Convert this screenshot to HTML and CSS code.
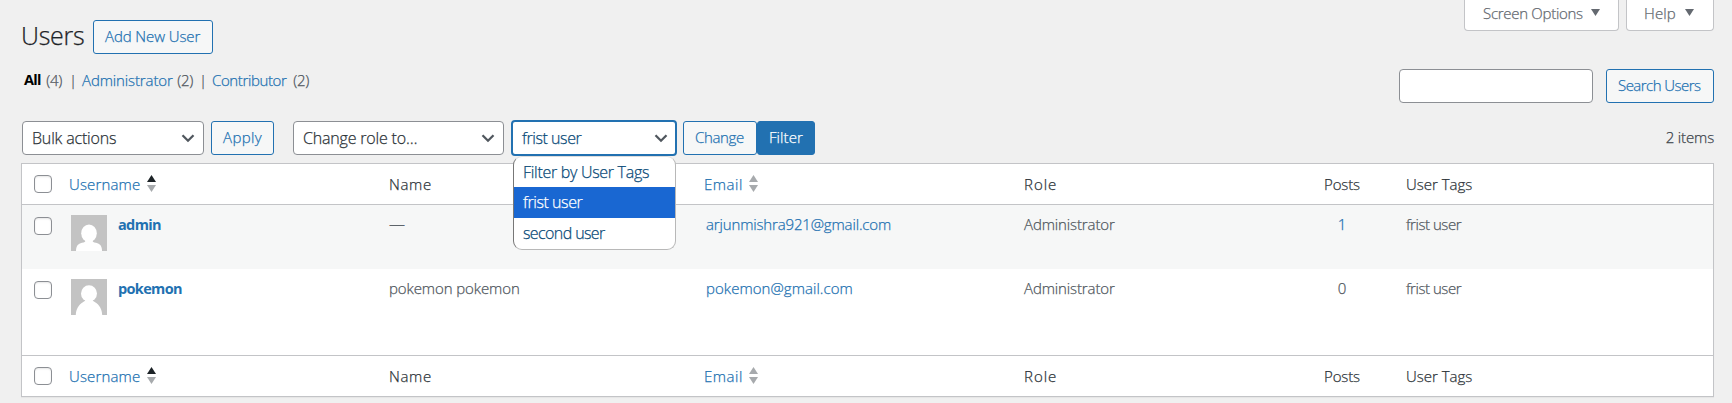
FILE: index.html
```html
<!DOCTYPE html>
<html lang="en">
<head>
<meta charset="utf-8">
<title>Users</title>
<link rel="stylesheet" href="styles.css">
</head>
<body>
<svg class="defs" width="0" height="0">
  <symbol id="chevron" viewBox="0 0 14 9"><path d="M1.500 1.300 7 6.700 12.500 1.300" fill="none" stroke="#50575e" stroke-width="2.300"/></symbol>
  <symbol id="up" viewBox="0 0 9 7"><path d="M4.500 0 9 7H0z"/></symbol>
  <symbol id="down" viewBox="0 0 9 7"><path d="M0 0H9L4.500 7z"/></symbol>
</svg>
<div class="page">
  <header class="top">
    <div class="heading">
      <h1 class="title">Users</h1>
      <a class="button add-new">Add New User</a>
    </div>
    <div class="screen-meta">
      <div class="tab options"><span>Screen Options</span><svg width="9" height="7"><use href="#down"/></svg></div>
      <div class="tab help"><span>Help</span><svg width="9" height="7"><use href="#down"/></svg></div>
    </div>
  </header>

  <div class="views">
    <ul class="subsub">
      <li class="v-all"><b>All</b><span class="count">(4)</span></li>
      <li class="bar wide">|</li>
      <li class="v-admin"><a class="t-admin">Administrator</a><span class="count">(2)</span></li>
      <li class="bar">|</li>
      <li class="v-contrib"><a class="t-contrib">Contributor</a><span class="count">(2)</span></li>
    </ul>
    <div class="search">
      <input class="search-box" type="text">
      <a class="button search-btn">Search Users</a>
    </div>
  </div>

  <div class="tablenav">
    <div class="select bulk"><span>Bulk actions</span><svg width="14" height="9"><use href="#chevron"/></svg></div>
    <a class="button apply">Apply</a>
    <div class="select role"><span>Change role to…</span><svg width="14" height="9"><use href="#chevron"/></svg></div>
    <div class="select tags"><span class="opt-frist">frist user</span><svg width="14" height="9"><use href="#chevron"/></svg>
      <div class="menu">
        <div class="option opt-filter">Filter by User Tags</div>
        <div class="option opt-frist selected">frist user</div>
        <div class="option opt-second">second user</div>
      </div>
    </div>
    <a class="button change">Change</a>
    <a class="button filter">Filter</a>
    <span class="items">2 items</span>
  </div>

  <div class="table">
    <div class="row head">
      <i class="check"></i>
      <a class="sort"><span class="h-username">Username</span><span class="arrows"><svg class="on" width="9" height="7"><use href="#up"/></svg><svg width="9" height="7"><use href="#down"/></svg></span></a>
      <span class="h-name">Name</span>
      <a class="sort"><span class="h-email">Email</span><span class="arrows"><svg width="9" height="7"><use href="#up"/></svg><svg width="9" height="7"><use href="#down"/></svg></span></a>
      <span class="h-role">Role</span>
      <span class="posts">Posts</span>
      <span class="h-tags">User Tags</span>
    </div>
    <div class="row user first">
      <i class="check"></i>
      <div class="who"><svg class="avatar" viewBox="0 0 36 36"><path fill="#c3c3c3" d="M0 0h36v36H0z"/><ellipse cx="18" cy="18.300" rx="7.800" ry="8.800" fill="#fff"/><path fill="#fff" d="M14.500 25h7c0 2 1 2.300 3.500 2.800 4 .9 6 3.200 6 8.200H5c0-5 2-7.300 6-8.200 2.500-.5 3.500-.8 3.500-2.800z"/></svg><a class="login">admin</a></div>
      <span class="dash">—</span>
      <a class="mail t-arjun">arjunmishra921@gmail.com</a>
      <span class="t-admin">Administrator</span>
      <a class="posts num">1</a>
      <span class="t-frist">frist user</span>
    </div>
    <div class="row user second">
      <i class="check"></i>
      <div class="who"><svg class="avatar" viewBox="0 0 36 36"><path fill="#c3c3c3" d="M0 0h36v36H0z"/><ellipse cx="18" cy="14.500" rx="8" ry="8.200" fill="#fff"/><path fill="#fff" d="M14.500 20h7c0 2 1 2.300 2.600 3.200 4.400 2.600 6.900 7 7.100 12.800H4.800c.2-5.800 2.700-10.200 7.100-12.800 1.600-.9 2.600-1.200 2.600-3.200z"/></svg><a class="login">pokemon</a></div>
      <span class="t-fullname">pokemon pokemon</span>
      <a class="mail t-pokemail">pokemon@gmail.com</a>
      <span class="t-admin">Administrator</span>
      <span class="posts num">0</span>
      <span class="t-frist">frist user</span>
    </div>
    <div class="row foot">
      <i class="check"></i>
      <a class="sort"><span class="h-username">Username</span><span class="arrows"><svg class="on" width="9" height="7"><use href="#up"/></svg><svg width="9" height="7"><use href="#down"/></svg></span></a>
      <span class="h-name">Name</span>
      <a class="sort"><span class="h-email">Email</span><span class="arrows"><svg width="9" height="7"><use href="#up"/></svg><svg width="9" height="7"><use href="#down"/></svg></span></a>
      <span class="h-role">Role</span>
      <span class="posts">Posts</span>
      <span class="h-tags">User Tags</span>
    </div>
  </div>
</div>
</body>
</html>
```
FILE: styles.css
```css
* { box-sizing: border-box; }
body {
  margin: 0;
  height: 403px;
  overflow: hidden;
  background: #f0f0f0;
  color: #50575e;
  font: 300 15px/20px "Open Sans", "Noto Sans", sans-serif;
  white-space: nowrap;
  -webkit-text-stroke: 0.25px currentColor;
}
a { color: #2271b1; }
svg { display: block; flex: none; }
.defs { position: absolute; }
.page { padding: 0 18px 0 21px; }

.button {
  display: block;
  height: 34px;
  padding-left: 11px;
  border: 1px solid #2271b1;
  border-radius: 3px;
  background: #f6f7f7;
  line-height: 31px;
}

.top { display: flex; justify-content: space-between; height: 69px; }
.heading { display: flex; padding-top: 20px; }
.title {
  width: 72px;
  margin: 0;
  font-size: 25px;
  font-weight: 300;
  line-height: 31px;
  letter-spacing: -0.3px;
  color: #1d2327;
}
.add-new { width: 120px; letter-spacing: -0.1px; }
.screen-meta { display: flex; gap: 7px; }
.tab {
  display: flex;
  justify-content: space-between;
  height: 31px;
  border: 1px solid #c3c4c7;
  border-top: 0;
  border-radius: 0 0 4px 4px;
  background: #fff;
  color: #646970;
  line-height: 27px;
  fill: #646970;
}
.tab svg { margin-top: 9px; }
.options { width: 155px; padding: 0 18px; letter-spacing: -0.29px; }
.help { width: 88px; padding: 0 19px 0 17px; letter-spacing: 0.15px; }

.views { display: flex; justify-content: space-between; height: 52px; }
.subsub { display: flex; margin: 0; padding: 1px 0 0 3px; list-style: none; }
.subsub li { display: flex; justify-content: space-between; }
.subsub b { font-size: 14.5px; font-weight: 700; color: #000; letter-spacing: -0.7px; -webkit-text-stroke: 0; }
.v-all { width: 38px; }
.v-admin { width: 111px; }
.v-contrib { width: 97px; }
.bar { width: 19px; padding-left: 6px; }
.subsub .wide { width: 20px; padding-left: 7px; }
.count { letter-spacing: -0.3px; }
.t-admin { letter-spacing: -0.12px; }
.t-contrib { letter-spacing: -0.38px; }
.search { display: flex; gap: 13px; }
.search-box {
  width: 194px;
  height: 34px;
  border: 1px solid #8c8f94;
  border-radius: 4px;
  background: #fff;
}
.search-btn { width: 108px; letter-spacing: -0.54px; }

.tablenav { display: flex; height: 42px; }
.select {
  display: flex;
  align-items: center;
  justify-content: space-between;
  height: 34px;
  padding: 0 8px 0 9px;
  border: 1px solid #8c8f94;
  border-radius: 4px;
  background: #fff;
  color: #2c3338;
  font-size: 16px;
  line-height: 31px;
}
.bulk { width: 182px; margin-left: 1px; letter-spacing: -0.17px; }
.apply { width: 63px; margin-left: 7px; letter-spacing: 0.4px; }
.role { width: 211px; margin-left: 19px; letter-spacing: -0.18px; }
.tags {
  position: relative;
  width: 166px;
  height: 36px;
  margin: -1px 0 0 7px;
  padding: 0 7px 0 9px;
  border: 2px solid #2271b1;
  color: #0a4b78;
}
.opt-frist { letter-spacing: -0.42px; }
.opt-filter { letter-spacing: -0.29px; }
.opt-second { letter-spacing: -0.6px; }
.menu {
  position: absolute;
  top: 34px;
  left: 0;
  z-index: 1;
  width: 163px;
  height: 94px;
  overflow: hidden;
  border: 1px solid #b8b8b8;
  border-left-color: #777;
  border-top-color: #ddd;
  border-radius: 9px;
  background: #fff;
}
.option { height: 31px; padding-left: 9px; line-height: 31px; }
.opt-filter { height: 30px; }
.selected { background: #1967d2; color: #fff; }
.change { width: 74px; margin-left: 6px; letter-spacing: -0.35px; }
.filter { width: 58px; background: #2271b1; color: #fff; letter-spacing: 0.08px; }
.items { margin-left: auto; line-height: 33px; color: #3c434a; letter-spacing: -0.15px; }

.table {
  height: 234px;
  border: 1px solid #c3c4c7;
  background: #fff;
  box-shadow: 0 1px 1px rgba(0, 0, 0, .04);
}
.row {
  display: grid;
  grid-template-columns: 46px 320px 315px 320px 280px 102px 1fr;
  padding-left: 1px;
}
.head, .foot { height: 41px; line-height: 38px; padding-top: 1px; color: #2c3338; }
.head { border-bottom: 1px solid #c3c4c7; }
.foot { border-top: 1px solid #c3c4c7; }
.sort { display: flex; }
.arrows { display: grid; gap: 3px; align-content: start; margin: 10px 0 0 8px; fill: #a7aaad; }
.on { fill: #1d2327; }
.check {
  width: 18px;
  height: 18px;
  margin: 10px 0 0 11px;
  border: 1px solid #8c8f94;
  border-radius: 4px;
  background: #fff;
  box-shadow: inset 0 1px 2px rgba(0, 0, 0, .1);
}
.user { line-height: 20px; padding-top: 9px; }
.user .check { margin-top: 3px; }
.first { height: 64px; background: #f6f7f7; }
.second { height: 86px; }
.who { display: flex; padding-left: 2px; }
.avatar { width: 36px; height: 36px; margin-top: 1px; }
.login { margin-left: 11px; font-size: 14.5px; line-height: 21px; font-weight: 700; letter-spacing: -0.65px; -webkit-text-stroke: 0; }
.dash { font-size: 16px; }
.mail { padding-left: 2px; }
.posts { width: 76px; text-align: center; letter-spacing: -0.14px; }
.h-username { width: 70px; letter-spacing: 0.16px; }
.h-name { letter-spacing: 0.66px; }
.h-email { width: 37px; letter-spacing: 0.53px; }
.h-role { letter-spacing: 0.97px; }
.t-arjun { letter-spacing: -0.15px; }
.t-pokemail { letter-spacing: 0.05px; }
.t-fullname { letter-spacing: -0.1px; }
.t-frist { letter-spacing: -0.45px; }
```
